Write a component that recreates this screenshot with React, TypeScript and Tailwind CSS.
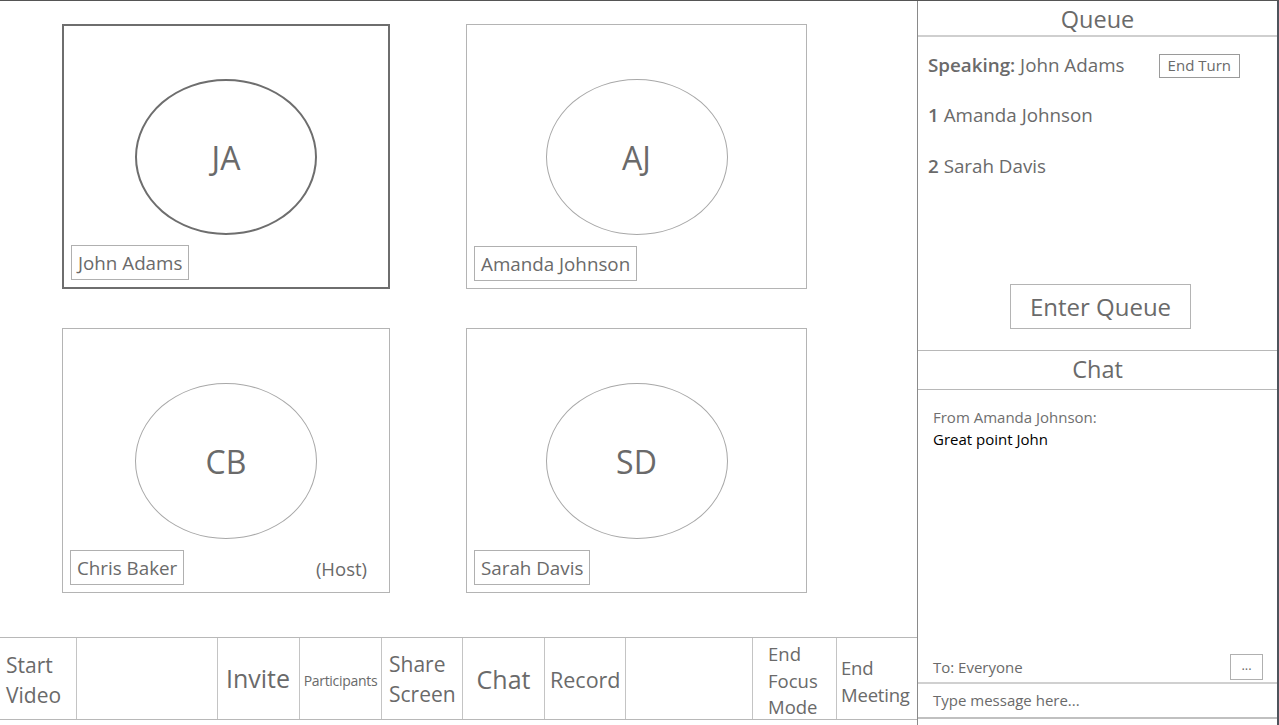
import React from "react";

const font = { fontFamily: '"Open Sans", "Noto Sans", sans-serif' };

function Tile({
  initials,
  name,
  active,
  host,
}: {
  initials: string;
  name: string;
  active?: boolean;
  host?: boolean;
}) {
  return (
    <div
      className={
        "relative flex h-[265px] items-center justify-center " +
        (active ? "border-2 border-[#6e6e6e]" : "border border-[#b4b4b4]")
      }
    >
      <div
        className={
          "flex h-[156px] w-[182px] items-center justify-center rounded-[50%] " +
          (active ? "border-2 border-[#6e6e6e]" : "border border-[#a8a8a8]")
        }
      >
        <span className="pt-[2px] text-[32px] leading-none text-[#6a6a6a]">{initials}</span>
      </div>
      <div className="absolute bottom-[7px] left-[7px] right-[22px] flex items-center justify-between">
        <div className="flex h-[35px] items-center border border-[#b0b0b0] px-[6px] pt-[2px] text-[18.8px] text-[#6a6a6a]">
          {name}
        </div>
        {host && <span className="pt-[3px] text-[18.5px] text-[#6a6a6a]">(Host)</span>}
      </div>
    </div>
  );
}

export default function App() {
  return (
    <div
      className="flex h-[725px] w-[1279px] overflow-hidden border-t border-[#555] bg-white text-[#6a6a6a]"
      style={font}
    >
      {/* Left area */}
      <div className="flex w-[917px] flex-col">
        <div className="h-[636px] pl-[62px] pt-[23px]">
          <div className="grid grid-cols-[328px_341px] gap-x-[76px] gap-y-[39px]">
            <Tile initials="JA" name="John Adams" active />
            <Tile initials="AJ" name="Amanda Johnson" />
            <Tile initials="CB" name="Chris Baker" host />
            <Tile initials="SD" name="Sarah Davis" />
          </div>
        </div>
        <div className="flex h-[83px] border-y border-[#b8b8b8]">
          <div className="flex w-[77px] flex-col justify-center border-r border-[#c4c4c4] pl-[6px] pt-[2px] text-[21px] leading-[30px]">
            <span>Start</span>
            <span>Video</span>
          </div>
          <div className="w-[141px] border-r border-[#c4c4c4]" />
          <div className="flex w-[82px] items-center justify-end border-r border-[#c4c4c4] pr-[9px] text-[25px]">
            Invite
          </div>
          <div className="flex w-[82px] items-center justify-center border-r border-[#c4c4c4] pt-[3px] text-[14px] tracking-[-0.3px]">
            Participants
          </div>
          <div className="flex w-[81px] flex-col justify-center border-r border-[#c4c4c4] pl-[7px] text-[21px] leading-[30px]">
            <span>Share</span>
            <span>Screen</span>
          </div>
          <div className="flex w-[82px] items-center justify-center border-r border-[#c4c4c4] pt-[3px] text-[25px]">
            Chat
          </div>
          <div className="flex w-[81px] items-center border-r border-[#c4c4c4] pl-[5px] pt-[3px] text-[21.5px]">
            Record
          </div>
          <div className="w-[127px] border-r border-[#c4c4c4]" />
          <div className="flex w-[84px] flex-col justify-center border-r border-[#c4c4c4] pl-[15px] pt-[5px] text-[18.5px] leading-[26.5px]">
            <span>End</span>
            <span>Focus</span>
            <span>Mode</span>
          </div>
          <div className="flex flex-1 flex-col justify-center pl-[4px] pt-[5px] text-[18.5px] leading-[27px] tracking-[-0.2px]">
            <span>End</span>
            <span>Meeting</span>
          </div>
        </div>
      </div>

      {/* Right panel */}
      <div className="flex flex-1 flex-col border-l border-r-2 border-l-[#8a8a8a] border-r-[#4e545c]">
        <div className="flex h-[36px] items-center justify-center border-b-2 border-[#cfcfcf] pt-[3px] text-[23.5px] leading-none">
          Queue
        </div>
        <div className="flex h-[313px] flex-col px-[10px]">
          <div className="mt-[16px] flex h-[25px] items-center justify-between pr-[27px]">
            <span className="text-[18.8px]">
              <span className="font-semibold">Speaking:</span> John Adams
            </span>
            <span className="flex h-[24px] items-center border border-[#9a9a9a] px-[8px] text-[15px]">
              End Turn
            </span>
          </div>
          <div className="mt-[25px] h-[25px] text-[18.8px] leading-[25px]">
            <span className="font-semibold">1</span> Amanda Johnson
          </div>
          <div className="mt-[26px] h-[25px] text-[18.8px] leading-[25px]">
            <span className="font-semibold">2</span> Sarah Davis
          </div>
          <div className="mt-[105px] flex justify-center pl-[6px]">
            <div className="flex h-[45px] w-[181px] items-center justify-center border border-[#b4b4b4] text-[24px]">
              Enter Queue
            </div>
          </div>
        </div>
        <div className="flex h-[40px] items-center justify-center border-y border-[#b8b8b8] text-[23.5px]">
          Chat
        </div>
        <div className="flex flex-1 flex-col px-[15px] pt-[16px] text-[15px] leading-[22px]">
          <span className="text-[#6f6f6f]">From Amanda Johnson:</span>
          <span className="text-black">Great point John</span>
        </div>
        <div className="flex h-[30px] items-center justify-between pl-[15px] pr-[14px] text-[15px]">
          <span>To: Everyone</span>
          <span className="flex h-[26px] w-[33px] items-center justify-center border border-[#b0b0b0] pb-[4px] text-[13px] leading-none">
            ...
          </span>
        </div>
        <div className="flex h-[37px] items-center border-y-2 border-[#d0d0d0] border-b-[#c0c0c0] pl-[15px] text-[15px]">
          Type message here...
        </div>
        <div className="h-[6px]" />
      </div>
    </div>
  );
}
